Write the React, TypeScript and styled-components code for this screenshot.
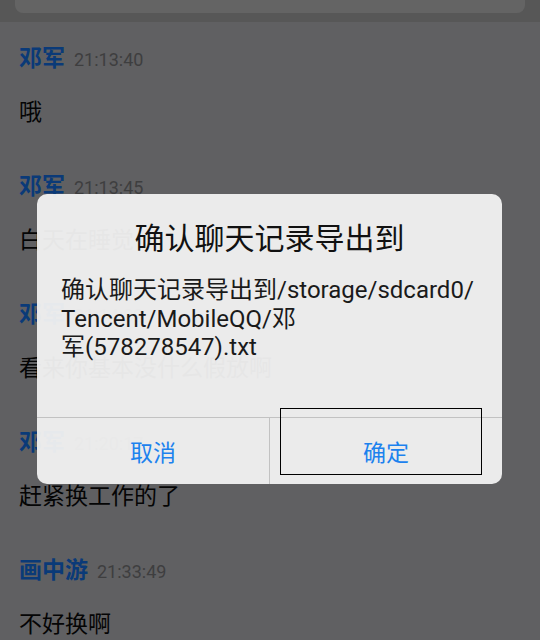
import React from 'react';
import styled, { createGlobalStyle } from 'styled-components';

const GlobalStyle = createGlobalStyle`
    html, body {
        margin: 0;
        padding: 0;
        background: #606062;
    }
    body {
        font-family: Roboto, "Noto Sans CJK SC", sans-serif;
    }
`

interface ChatMessage {
    id: number;
    name: string;
    time: string;
    text: string;
}

const messages: ChatMessage[] = [
    { id: 1, name: '邓军', time: '21:13:40', text: '哦' },
    { id: 2, name: '邓军', time: '21:13:45', text: '白天在睡觉' },
    { id: 3, name: '邓军', time: '21:14:02', text: '看来你基本没什么假放啊' },
    { id: 4, name: '邓军', time: '21:20:17', text: '赶紧换工作的了' },
    { id: 5, name: '画中游', time: '21:33:49', text: '不好换啊' },
];

const Screen = styled.div`
    position: relative;
    width: 540px;
    height: 640px;
    overflow: hidden;
    background: #606062;
`
const TopBar = styled.div`
    height: 22px;
    background: #575757;
    padding: 0 15px;
    box-sizing: border-box;
`
const SearchBox = styled.div`
    height: 13px;
    background: #646464;
    border-radius: 0 0 8px 8px;
`
const ChatList = styled.div`
    display: flex;
    flex-direction: column;
    gap: 42px;
    padding: 18px 19px 0;
`
const Message = styled.div`
    display: flex;
    flex-direction: column;
    gap: 22px;
`
const Header = styled.div`
    display: flex;
    align-items: baseline;
    gap: 9px;
    height: 32px;
    line-height: 32px;
`
const Name = styled.span`
    font-family: "Noto Sans CJK SC", sans-serif;
    font-weight: 700;
    font-size: 23px;
    color: #0a3a78;
`
const Time = styled.span`
    font-family: Roboto, sans-serif;
    font-size: 18px;
    color: #3e3e3f;
`
const Body = styled.div`
    font-family: "Noto Sans CJK SC", sans-serif;
    font-size: 23px;
    line-height: 32px;
    height: 32px;
    color: #050505;
`
const Dialog = styled.div`
    position: absolute;
    left: 37px;
    top: 194px;
    width: 465px;
    height: 290px;
    border-radius: 10px;
    background: rgba(242, 242, 242, 0.95);
    display: flex;
    flex-direction: column;
`
const Title = styled.div`
    padding-top: 22px;
    height: 40px;
    line-height: 40px;
    text-align: center;
    font-family: "Noto Sans CJK SC", sans-serif;
    font-size: 30px;
    color: #111;
`
const Content = styled.div`
    margin-top: 20px;
    padding: 0 24px;
    font-family: Roboto, "Noto Sans CJK SC", sans-serif;
    font-size: 24px;
    line-height: 28.5px;
    color: #1a1a1a;
    white-space: nowrap;
    flex: 1;
`
const Line = styled.div``
const Buttons = styled.div`
    display: flex;
    height: 66px;
    border-top: 1px solid #c2c2c2;
`
const DialogButton = styled.div<{ $first?: boolean }>`
    position: relative;
    flex: 1;
    display: flex;
    align-items: center;
    justify-content: center;
    font-family: "Noto Sans CJK SC", sans-serif;
    font-size: 23px;
    color: #1c82ee;
    border-right: ${p => p.$first ? '1px solid #c2c2c2' : 'none'};
`
const FocusRing = styled.div`
    position: absolute;
    left: 10px;
    right: 20px;
    top: -10px;
    bottom: 9px;
    border: 1px solid #000;
`

const App: React.FC = () => {
    return (
        <Screen>
            <GlobalStyle />
            <TopBar>
                <SearchBox />
            </TopBar>
            <ChatList>
                {messages.map(m => (
                    <Message key={m.id}>
                        <Header>
                            <Name>{m.name}</Name>
                            <Time>{m.time}</Time>
                        </Header>
                        <Body>{m.text}</Body>
                    </Message>
                ))}
            </ChatList>
            <Dialog>
                <Title>确认聊天记录导出到</Title>
                <Content>
                    <Line>确认聊天记录导出到/storage/sdcard0/</Line>
                    <Line>Tencent/MobileQQ/邓</Line>
                    <Line>军(578278547).txt</Line>
                </Content>
                <Buttons>
                    <DialogButton $first>取消</DialogButton>
                    <DialogButton>
                        确定
                        <FocusRing />
                    </DialogButton>
                </Buttons>
            </Dialog>
        </Screen>
    );
};

export default App;
